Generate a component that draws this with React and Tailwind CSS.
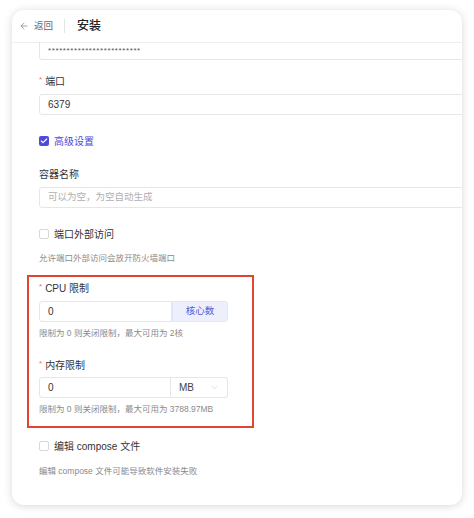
import React from "react";
import { ArrowLeft, Check, ChevronDown } from "lucide-react";

const FONT = "font-['Liberation_Sans','Noto_Sans_CJK_SC',sans-serif]";

function Label({ required, children, className = "" }) {
  return (
    <div className={`h-[16px] flex items-center text-[10px] text-[#333] ${className}`}>
      {required && <span className="text-[#f56c6c] mr-[3px] text-[8px] -mt-[2px]">*</span>}
      {children}
    </div>
  );
}

function Help({ children, className = "" }) {
  return <div className={`h-[14px] flex items-center text-[8.5px] text-[#8a8a8a] whitespace-nowrap ${className}`}>{children}</div>;
}

function CheckRow({ checked, children, className = "" }) {
  return (
    <div className={`h-[16px] flex items-center gap-[5px] ${className}`}>
      <span
        className={`h-[10px] w-[10px] rounded-[2px] flex items-center justify-center ${
          checked ? "bg-[#4f4bd8]" : "border border-[#d9d9d9] bg-white"
        }`}
      >
        {checked && <Check className="h-[8px] w-[8px] text-white" strokeWidth={3.5} />}
      </span>
      <span className={`text-[10px] ${checked ? "text-[#4f4bd8]" : "text-[#333]"}`}>{children}</span>
    </div>
  );
}

export default function App() {
  return (
    <div className={`min-h-[518px] w-[474px] bg-white pt-[10px] pl-[12px] ${FONT}`}>
      <div className="w-[450px] h-[495px] bg-white rounded-[12px] overflow-hidden shadow-[0_1px_8px_rgba(0,0,0,0.16)]">
        {/* header */}
        <div className="h-[33px] border-b border-[#efefef] flex items-center pl-[7px]">
          <ArrowLeft className="h-[10px] w-[10px] text-[#777]" strokeWidth={1.6} />
          <span className="ml-[5px] text-[9.5px] text-[#666]">返回</span>
          <span className="ml-[11px] h-[14px] w-px bg-[#e4e4e4]" />
          <span className="ml-[12px] text-[12px] font-medium text-[#222]">安装</span>
        </div>

        <div className="pl-[27px]">
          {/* password field, scrolled under the header */}
          <div className="h-[18px] w-[440px] border-x border-b border-[#e6e6e6] rounded-b-[3px] flex items-center pl-[8px] text-[8px] tracking-[0.6px] text-[#555] -mt-[1px]">
            *************************
          </div>

          <Label required className="mt-[13px]">端口</Label>
          <div className="mt-[5px] h-[21px] w-[440px] border border-[#e6e6e6] rounded-[3px] flex items-center pl-[8px] text-[10px] text-[#333]">
            6379
          </div>

          <CheckRow checked className="mt-[18px]">高级设置</CheckRow>

          <Label className="mt-[17px]">容器名称</Label>
          <div className="mt-[5px] h-[21px] w-[440px] border border-[#e6e6e6] rounded-[3px] flex items-center pl-[8px] text-[9.5px] text-[#b0b0b0]">
            可以为空，为空自动生成
          </div>

          <CheckRow className="mt-[18px]">端口外部访问</CheckRow>
          <Help className="mt-[9px]">允许端口外部访问会放开防火墙端口</Help>
        </div>

        {/* resource limits */}
        <div className="ml-[15px] mt-[10px] w-[227px] border-2 border-[#e2452f] pl-[10px] pt-[3px] pb-[10px]">
          <Label required>CPU 限制</Label>
          <div className="mt-[5px] h-[21px] w-[189px] flex">
            <div className="flex-1 border border-[#e6e6e6] rounded-l-[3px] flex items-center pl-[8px] text-[10px] text-[#333]">0</div>
            <div className="w-[56px] bg-[#edf0fc] border border-[#e2e6f8] rounded-r-[3px] flex items-center justify-center text-[9.5px] text-[#5057d6]">
              核心数
            </div>
          </div>
          <Help className="mt-[4px]">限制为 0 则关闭限制，最大可用为 2核</Help>

          <Label required className="mt-[17px]">内存限制</Label>
          <div className="mt-[4px] h-[21px] w-[189px] flex">
            <div className="flex-1 border border-[#e6e6e6] rounded-l-[3px] flex items-center pl-[8px] text-[10px] text-[#333]">0</div>
            <div className="w-[57px] border border-l-0 border-[#e6e6e6] rounded-r-[3px] flex items-center justify-between pl-[8px] pr-[8px] text-[10px] text-[#444]">
              MB
              <ChevronDown className="h-[9px] w-[9px] text-[#c4c4c4]" strokeWidth={1.5} />
            </div>
          </div>
          <Help className="mt-[4px]">限制为 0 则关闭限制，最大可用为 3788.97MB</Help>
        </div>

        <div className="pl-[27px]">
          <CheckRow className="mt-[10px]">编辑 compose 文件</CheckRow>
          <Help className="mt-[10px]">编辑 compose 文件可能导致软件安装失败</Help>
        </div>
      </div>
    </div>
  );
}
